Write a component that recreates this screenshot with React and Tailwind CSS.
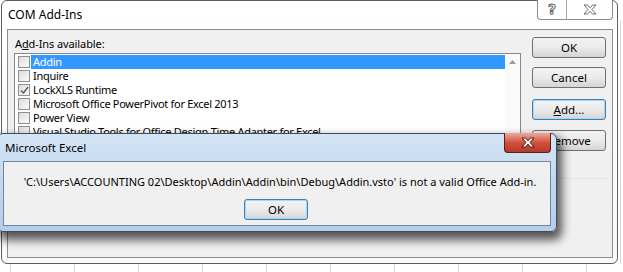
import React from 'react';

const addins = [
  { name: 'Addin', selected: true },
  { name: 'Inquire' },
  { name: 'LockXLS Runtime', checked: true },
  { name: 'Microsoft Office PowerPivot for Excel 2013' },
  { name: 'Power View' },
  { name: 'Visual Studio Tools for Office Design-Time Adapter for Excel' },
  { name: 'Team Foundation Add-in' },
  { name: 'Euro Currency Tools' },
];

const Checkbox = ({ checked }) => (
  <div className="w-[12px] h-[12px] shrink-0 border border-[#8e8f8f] bg-gradient-to-br from-[#dcdcdc] to-[#fbfbfb] flex items-center justify-center">
    {checked && (
      <svg width="9" height="9" viewBox="0 0 9 9">
        <path d="M1 4.5 L3.5 7 L8 1" fill="none" stroke="#4a5a6e" strokeWidth="1.4" />
      </svg>
    )}
  </div>
);

const Button = ({ children, focused, className = '' }) => (
  <div
    className={`h-[21px] flex items-center justify-center rounded-[3px] border bg-gradient-to-b from-[#f2f2f2] via-[#ebebeb] to-[#d4d4d4] text-[11.5px] leading-none ${
      focused ? 'border-[#3c7fb1] shadow-[inset_0_0_0_1px_#a9d7f5]' : 'border-[#707070]'
    } ${className}`}
  >
    {children}
  </div>
);

const OutlineX = ({ fill, stroke }) => (
  <svg width="14" height="11" viewBox="0 0 14 11">
    <polygon
      points="1,1 4.5,1 7,3.8 9.5,1 13,1 9,5.5 13,10 9.5,10 7,7.2 4.5,10 1,10 5,5.5"
      fill={fill}
      stroke={stroke}
      strokeWidth="1"
    />
  </svg>
);

const ComAddIns = () => (
  <div className="ml-[1px] w-[617px] h-[264px] border border-[#5e5e5e] rounded-[6px] bg-gradient-to-b from-white to-[#f7f9fb] pl-[5px] pr-[4px] flex flex-col">
    <div className="h-[28px] flex items-start justify-between">
      <span className="pl-[1px] leading-[28px] text-[12px]">COM Add-Ins</span>
      <div className="-mt-[1px] h-[20px] flex border border-t-0 border-[#8c8c8c] rounded-b-[4px] bg-white">
        <div className="w-[29px] flex items-center justify-center border-r border-[#a8a8a8] text-[14px] font-bold text-transparent [-webkit-text-stroke:1px_#666] font-['DejaVu_Sans',sans-serif]">
          ?
        </div>
        <div className="w-[45px] flex items-center justify-center">
          <OutlineX fill="white" stroke="#6b6b6b" />
        </div>
      </div>
    </div>
    <div className="h-[229px] border border-[#8d8d8d] bg-[#f0f0f0] pl-[6px] flex">
      <div className="w-[507px] flex flex-col pt-[7px]">
        <div className="h-[14px] leading-[14px] pl-[1px] text-[11px] tracking-[-0.1px]">
          A<span className="underline">d</span>d-Ins available:
        </div>
        <div className="mt-[2px] h-[130px] border border-[#828790] bg-white flex">
          <div className="flex-1 pt-[1px] flex flex-col text-[11px] tracking-[-0.3px]">
            {addins.map((a) => (
              <div key={a.name} className="h-[14px] flex items-center pl-[3px]">
                <Checkbox checked={a.checked} />
                <div
                  className={`ml-[1px] flex-1 h-[14px] leading-[14px] px-[2px] whitespace-nowrap overflow-hidden ${
                    a.selected ? 'bg-[#3399ff] text-white' : ''
                  }`}
                >
                  {a.name}
                </div>
              </div>
            ))}
          </div>
          <div className="w-[15px] bg-[#fafafa] flex flex-col items-center pt-[6px]">
            <svg width="7" height="4" viewBox="0 0 7 4">
              <polygon points="0,4 3.5,0 7,4" fill="#9a9a9a" />
            </svg>
          </div>
        </div>
      </div>
      <div className="ml-[11px] w-[74px] flex flex-col pt-[7px]">
        <Button>OK</Button>
        <Button className="mt-[9px]">Cancel</Button>
        <Button focused className="mt-[11px]">
          <span>
            <span className="underline">A</span>dd...
          </span>
        </Button>
        <Button className="mt-[10px]">
          <span>
            <span className="underline">R</span>emove
          </span>
        </Button>
        <div className="mt-[27px] -mr-[3px] h-[1px] bg-[#e4e4e4]" />
      </div>
    </div>
  </div>
);

const MessageBox = () => (
  <div className="absolute left-[-3px] top-[133px] w-[560px] h-[99px] rounded-[6px] border border-[#3d4b5c] bg-gradient-to-b from-[#d4e4f5] via-[#c2d8ef] to-[#b5cde9] px-[5px] flex flex-col shadow-[3px_6px_10px_2px_rgba(0,0,0,0.65)]">
    <div className="h-[27px] flex items-start justify-between">
      <span className="pl-[2px] leading-[27px] text-[11.5px]">Microsoft Excel</span>
      <div className="-mt-[1px] w-[47px] h-[20px] rounded-b-[4px] border border-t-0 border-[#5b1f14] bg-gradient-to-b from-[#eba99a] via-[#d0513e] to-[#b8382a] flex items-center justify-center">
        <OutlineX fill="white" stroke="#4a1a12" />
      </div>
    </div>
    <div className="h-[65px] border border-[#6f87a3] bg-[#f0f0f0] flex flex-col items-center pt-[13px]">
      <div className="h-[14px] leading-[14px] whitespace-nowrap pl-[6px] text-[11px]">
        'C:\Users\ACCOUNTING 02\Desktop\Addin\Addin\bin\Debug\Addin.vsto' is not a valid Office Add-in.
      </div>
      <Button focused className="mt-[10px] w-[64px] -ml-[2px]">
        OK
      </Button>
    </div>
  </div>
);

const App = () => {
  const cols = [0, 1, 2, 3, 4, 5, 6, 7, 8, 9];
  return (
    <div className="relative w-[623px] h-[272px] overflow-hidden bg-white text-[12px] text-black font-['Noto_Sans',sans-serif]">
      <div className="flex h-[264px]">
        <ComAddIns />
        <div className="ml-[2px] mt-[20px] flex-1 border-l border-[#d6d6d6]" />
      </div>
      <div className="flex h-[8px] pl-[10px]">
        {cols.map((c) => (
          <div key={c} className="w-[64px] shrink-0 border-l border-[#d6d6d6]" />
        ))}
      </div>
      <MessageBox />
    </div>
  );
};

export default App;
